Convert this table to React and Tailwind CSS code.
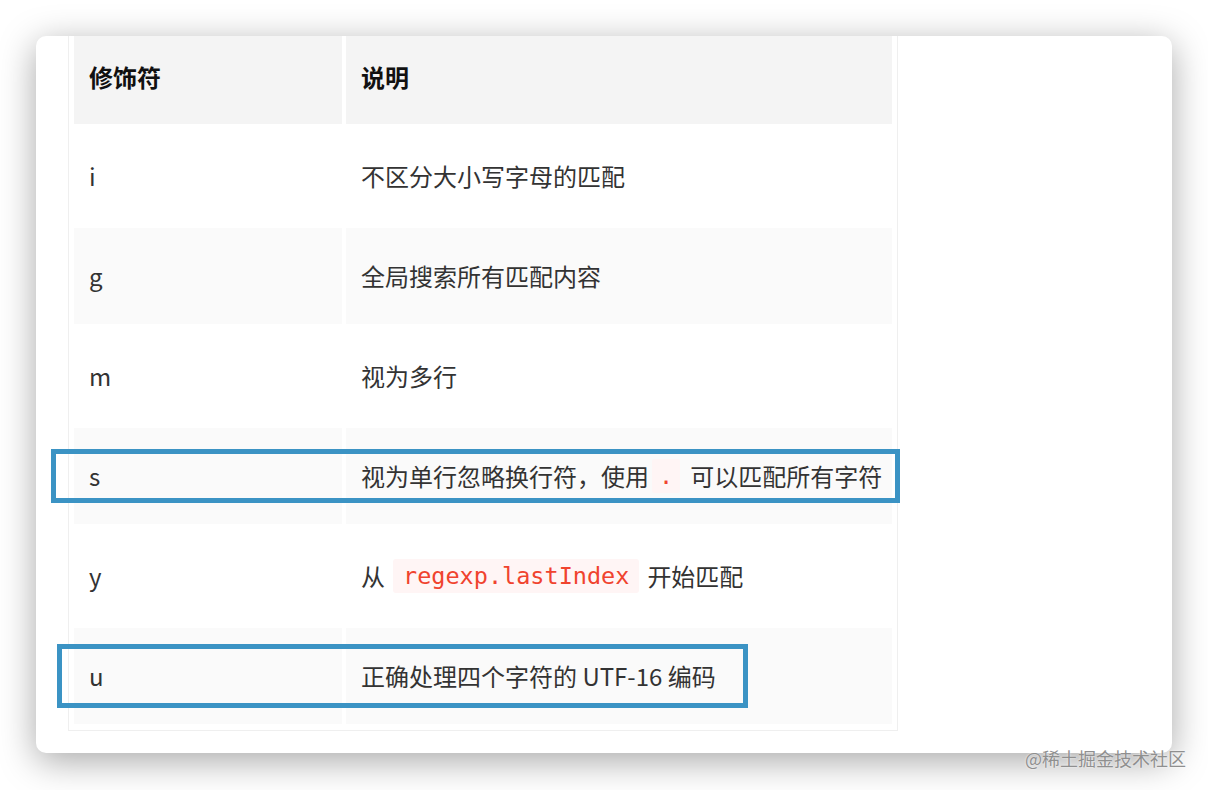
const ROWS = [
  { key: 'i', desc: ['不区分大小写字母的匹配'], bg: 'bg-white' },
  { key: 'g', desc: ['全局搜索所有匹配内容'], bg: 'bg-[#fafafa]' },
  { key: 'm', desc: ['视为多行'], bg: 'bg-white' },
  { key: 's', desc: ['视为单行忽略换行符，使用', { code: '.', cls: 'ml-[3px] mr-[10px] px-[7px]' }, '可以匹配所有字符'], bg: 'bg-[#fafafa]' },
  { key: 'y', desc: ['从', { code: 'regexp.lastIndex', cls: 'mx-[8px] px-[10px]' }, '开始匹配'], bg: 'bg-white' },
  { key: 'u', desc: ['正确处理四个字符的 UTF-16 编码'], bg: 'bg-[#fafafa]' },
];

function Code({ children, cls }) {
  return (
    <code className={`${cls} py-[2px] rounded-[3px] bg-[#fff5f5] text-[#f0432e] text-[23.5px] leading-[30px] font-['DejaVu_Sans_Mono','Liberation_Mono',monospace]`}>
      {children}
    </code>
  );
}

function Row({ row }) {
  return (
    <div className="flex gap-[4px] h-[96px]">
      <div className={`w-[268px] flex items-center pl-[15px] ${row.bg}`}>{row.key}</div>
      <div className={`flex-1 flex items-center pl-[15px] whitespace-nowrap ${row.bg}`}>
        {row.desc.map((part, i) =>
          typeof part === 'string' ? (
            <span key={i}>{part}</span>
          ) : (
            <Code key={i} cls={part.cls}>{part.code}</Code>
          )
        )}
      </div>
    </div>
  );
}

export default function App() {
  return (
    <div className="relative w-[1208px] h-[790px] bg-white overflow-hidden pt-[36px] pl-[36px] font-['Noto_Sans_CJK_SC',sans-serif]">
      <div className="relative w-[1136px] h-[717px] bg-white rounded-[10px] overflow-hidden shadow-[0_8px_36px_rgba(0,0,0,0.35)] pl-[32px]">
        {/* table */}
        <div className="w-[830px] border-x border-b border-[#efefef] px-[5px] pb-[6px] flex flex-col gap-[4px] text-[24px] text-[#333]">
          <div className="flex gap-[4px] h-[88px] font-bold text-[#111]">
            <div className="w-[268px] flex items-center pl-[15px] pb-[6px] bg-[#f4f4f4]">修饰符</div>
            <div className="flex-1 flex items-center pl-[15px] pb-[6px] bg-[#f4f4f4]">说明</div>
          </div>
          {ROWS.map((row) => (
            <Row key={row.key} row={row} />
          ))}
        </div>

        {/* annotation boxes */}
        <div className="absolute left-[15px] top-[413px] w-[849px] h-[54px] border-[5px] border-[#3b93c4]" />
        <div className="absolute left-[21px] top-[608px] w-[691px] h-[64px] border-[5px] border-[#3b93c4]" />
      </div>

      <div className="absolute right-[22px] bottom-[20px] text-[18px] leading-[24px] text-[#8f8f8f] [text-shadow:0_0_2px_#fff]">
        @稀土掘金技术社区
      </div>
    </div>
  );
}
